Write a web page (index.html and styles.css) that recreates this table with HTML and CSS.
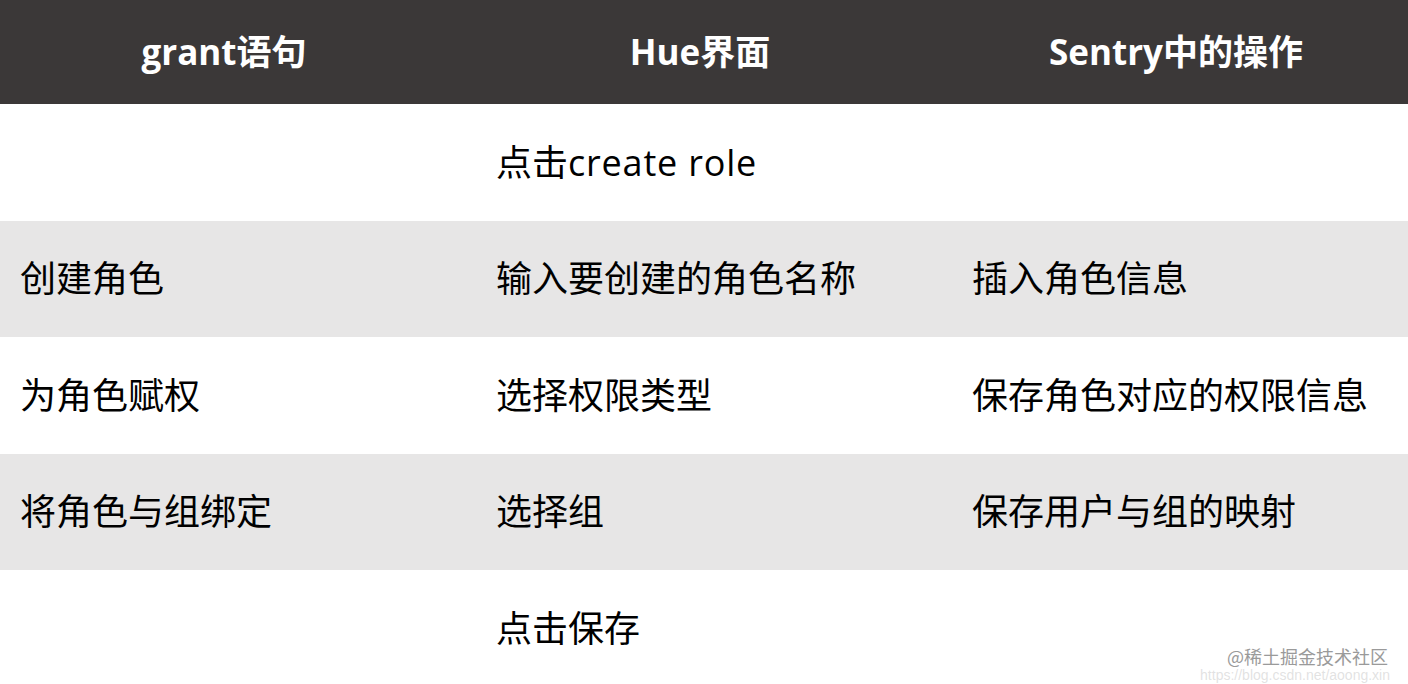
FILE: index.html
```html
<!DOCTYPE html>
<html lang="zh-CN">
<head>
<meta charset="utf-8">
<title>Sentry</title>
<link rel="stylesheet" href="styles.css">
</head>
<body>
<div class="page">
  <div class="row head">
    <div class="cell c1">grant语句</div>
    <div class="cell c2">Hue界面</div>
    <div class="cell c3">Sentry中的操作</div>
  </div>
  <div class="row">
    <div class="cell"></div>
    <div class="cell">点击<span class="latin">create role</span></div>
    <div class="cell"></div>
  </div>
  <div class="row alt">
    <div class="cell">创建角色</div>
    <div class="cell">输入要创建的角色名称</div>
    <div class="cell">插入角色信息</div>
  </div>
  <div class="row">
    <div class="cell">为角色赋权</div>
    <div class="cell">选择权限类型</div>
    <div class="cell">保存角色对应的权限信息</div>
  </div>
  <div class="row alt">
    <div class="cell">将角色与组绑定</div>
    <div class="cell">选择组</div>
    <div class="cell">保存用户与组的映射</div>
  </div>
  <div class="row">
    <div class="cell"></div>
    <div class="cell">点击保存</div>
    <div class="cell"></div>
  </div>
  <div class="watermark">
    <span class="wm-text">@稀土掘金技术社区</span>
    <span class="wm-url">https://blog.csdn.net/aoong.xin</span>
  </div>
</div>
</body>
</html>
```
FILE: styles.css
```css
html, body {
  margin: 0;
  padding: 0;
  background: #ffffff;
}
.page {
  position: relative;
  width: 1408px;
  height: 684px;
  overflow: hidden;
  font-family: "Open Sans", "Noto Sans CJK SC", sans-serif;
  color: #000000;
}
.row {
  display: grid;
  grid-template-columns: 476px 476px 1fr;
  height: 116.6px;
  align-items: center;
  background: #ffffff;
}
.row.alt {
  background: #e7e6e6;
}
.cell {
  padding-left: 20px;
  font-size: 36px;
  line-height: 1.2;
  white-space: nowrap;
}
.latin {
  letter-spacing: 0.8px;
}
.row.head {
  height: 104px;
  background: #3b3838;
  color: #ffffff;
}
.head .cell {
  padding-left: 0;
  text-align: center;
  font-weight: 700;
  font-size: 35px;
}
.head .c1 { padding-right: 28px; }
.head .c2 { padding-right: 28px; }
.head .c3 { padding-right: 8px; }
.watermark {
  position: absolute;
  right: 18px;
  bottom: 2px;
  display: flex;
  flex-direction: column;
  align-items: flex-end;
  gap: 3px;
}
.wm-text {
  font-family: "Noto Sans CJK SC", sans-serif;
  font-size: 18px;
  line-height: 18px;
  color: #9a9a9a;
  white-space: nowrap;
  margin-right: 2px;
}
.wm-url {
  font-family: "Liberation Sans", sans-serif;
  font-size: 14px;
  line-height: 14px;
  color: rgba(190, 190, 190, 0.45);
  white-space: nowrap;
}
```
